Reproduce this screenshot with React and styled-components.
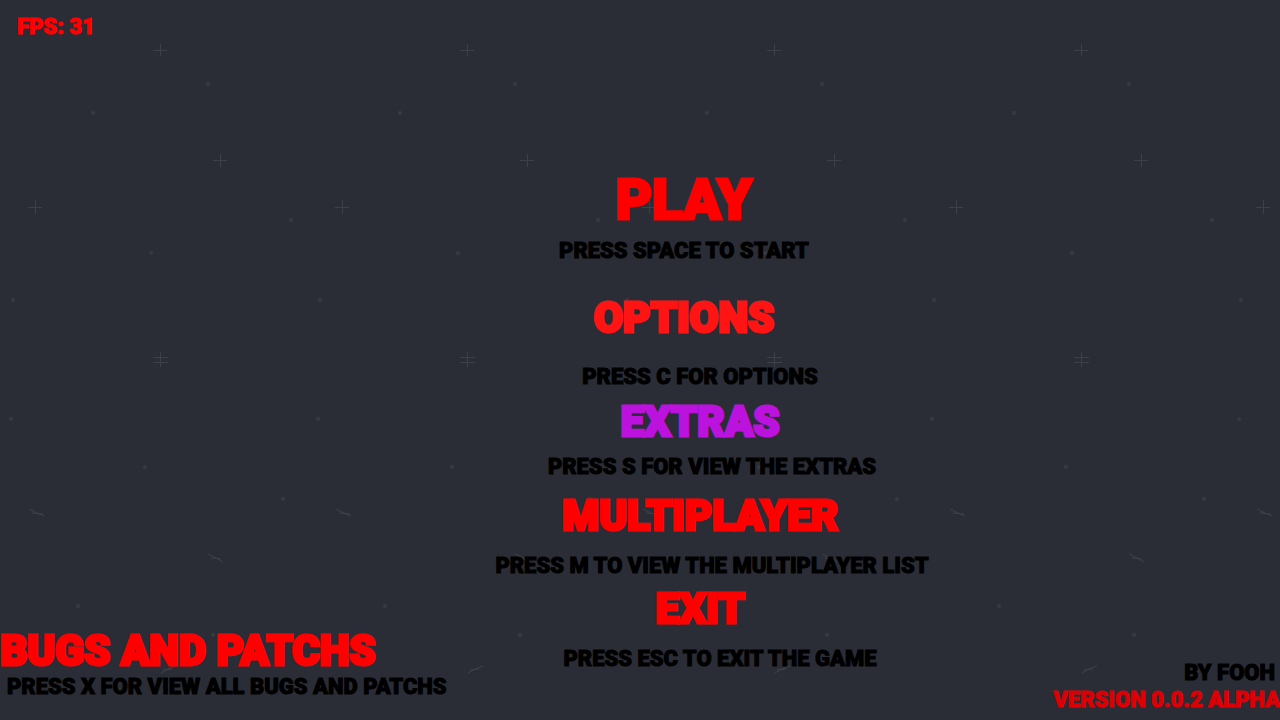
import React from "react";
import styled, { createGlobalStyle } from "styled-components";

const GlobalStyle = createGlobalStyle`
  *, *::before, *::after { box-sizing: border-box; }
  body {
    margin: 0;
    background: #2b2d36;
    font-family: "Roboto", "Liberation Sans", sans-serif;
    font-weight: 900;
    text-transform: uppercase;
  }
`;

const Screen = styled.main`
  position: relative;
  display: grid;
  grid-template: 1fr / 1fr;
  min-height: 100vh;
  overflow: hidden;

  > * { grid-area: 1 / 1; }
`;

const Backdrop = styled.svg`
  position: absolute;
  inset: 0;
  width: 100%;
  height: 100%;
`;

const Title = styled.button`
  position: relative;
  padding: 0;
  border: 0;
  background: none;
  color: ${(p) => p.$color || "#ff0000"};
  font: inherit;
  font-size: ${(p) => (p.$large ? 56 : 42)}px;
  line-height: 48px;
  text-transform: inherit;
  white-space: nowrap;
  cursor: pointer;
  -webkit-text-stroke: 3px currentColor;
`;

const Hint = styled.p`
  position: relative;
  margin: 0;
  color: ${(p) => p.$color || "#000000"};
  font-size: 22px;
  line-height: 24px;
  white-space: nowrap;
  -webkit-text-stroke: 1px currentColor;
`;

const Fps = styled(Hint)`
  place-self: start;
  padding: 15px 17px;
`;

const Menu = styled.nav`
  place-self: start center;
  display: flex;
  flex-direction: column;
  padding: 176px 0 48px 120px;
`;

const Entry = styled.div`
  display: flex;
  flex-direction: column;
  align-items: center;
  gap: ${(p) => p.$gap}px;
  padding-bottom: ${(p) => p.$after}px;

  ${Title} { margin-left: ${(p) => p.$titleShift * 2}px; }
  ${Hint} { margin-left: ${(p) => p.$hintShift * 2}px; }
`;

const Bugs = styled.section`
  place-self: end start;
  display: flex;
  flex-direction: column;
  align-items: flex-start;
  padding-bottom: 21px;

  ${Hint} { padding-left: 7px; }
`;

const Credits = styled.footer`
  place-self: end;
  display: flex;
  flex-direction: column;
  align-items: flex-end;
  gap: 3px;
  padding-bottom: 8px;

  ${Hint}:first-child { padding-right: 5px; }
`;

const entries = [
  { title: "Play", hint: "Press Space to Start", large: true, titleShift: -16, hintShift: -16, gap: 15, after: 31 },
  { title: "Options", hint: "Press C for Options", color: "#ff1414", titleShift: -16, hintShift: 0, gap: 23, after: 9 },
  { title: "Extras", hint: "Press S for view the Extras", color: "#bb12de", titleShift: 0, hintShift: 12, gap: 9, after: 13 },
  { title: "Multiplayer", hint: "Press M to view the multiplayer list", titleShift: 0, hintShift: 12, gap: 14, after: 7 },
  { title: "Exit", hint: "Press Esc to Exit the game", titleShift: 0, hintShift: 20, gap: 14, after: 0 },
];

const dots = [
  [208, 84], [93, 113], [291, 220], [151, 253], [13, 300],
  [11, 419], [145, 467], [283, 499], [78, 606], [213, 635],
];

function Stars() {
  return (
    <Backdrop aria-hidden="true">
      <defs>
        <pattern id="stars" width="307" height="720" patternUnits="userSpaceOnUse">
          <g stroke="#3d4048" strokeWidth="1" fill="none">
            <path d="M153 50.5h14M160.500 44v12M213 160.500h14M220.500 154v13M28 207.500h14M35.500 200v14" />
            <path d="M153 357.500h15M153 362.500h15M160.500 352v15" />
            <path d="M29 509l8 4l7 3M32 513l11 1M208 554l8 4l7 4M211 558l10 1M161 673l7-4l8-3M163 670l9-1" />
          </g>
          {dots.map(([x, y]) => (
            <circle key={`${x}-${y}`} cx={x} cy={y} r="2" fill="#363941" />
          ))}
        </pattern>
      </defs>
      <rect width="100%" height="100%" fill="url(#stars)" />
    </Backdrop>
  );
}

export default function App() {
  return (
    <>
      <GlobalStyle />
      <Screen>
        <Stars />
        <Fps $color="#ff0000">FPS: 31</Fps>
        <Menu>
          {entries.map((e) => (
            <Entry key={e.title} $gap={e.gap} $after={e.after} $titleShift={e.titleShift} $hintShift={e.hintShift}>
              <Title type="button" $large={e.large} $color={e.color}>{e.title}</Title>
              <Hint>{e.hint}</Hint>
            </Entry>
          ))}
        </Menu>
        <Bugs>
          <Title type="button">Bugs and Patchs</Title>
          <Hint>Press X for view all Bugs and Patchs</Hint>
        </Bugs>
        <Credits>
          <Hint>By Fooh</Hint>
          <Hint $color="#dc0004">Version 0.0.2 Alpha</Hint>
        </Credits>
      </Screen>
    </>
  );
}
